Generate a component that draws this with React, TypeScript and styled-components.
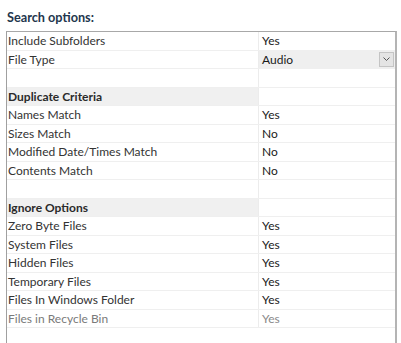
import styled, { createGlobalStyle } from 'styled-components';

const GlobalStyle = createGlobalStyle`
  body {
    margin: 0;
    background: #ffffff;
    font-family: Lato, "Open Sans", sans-serif;
  }
`;

const StyledPage = styled.div`
  width: 401px;
  height: 343px;
  overflow: hidden;
  padding-left: 6px;
  box-sizing: border-box;
`;

const StyledTitle = styled.div`
  height: 31px;
  display: flex;
  align-items: center;
  padding-left: 1px;
  padding-top: 3px;
  box-sizing: border-box;
  font-size: 12.7px;
  font-weight: 700;
  color: #23364d;
`;

const StyledGrid = styled.div`
  width: 391px;
  height: 320px;
  border-top: 1px solid #a8a8a8;
  border-left: 1px solid #a0a0a0;
  border-right: 2px solid #b4b4b4;
  box-sizing: border-box;
`;

const StyledRow = styled.div<{ $header?: boolean }>`
  display: grid;
  grid-template-columns: 252px 1fr;
  height: 18.5px;
  border-bottom: 1px solid #efefef;
  box-sizing: border-box;
  font-size: 12px;
  font-weight: ${(p) => (p.$header ? 700 : 400)};
`;

const StyledName = styled.div<{ $header?: boolean; $dim?: boolean }>`
  display: flex;
  align-items: center;
  padding-left: 1px;
  background: ${(p) => (p.$header ? '#f0f0f0' : 'transparent')};
  color: ${(p) => (p.$dim ? '#7a7a7a' : p.$header ? '#2a2a2a' : '#333333')};
  border-right: 1px solid #ececec;
  white-space: nowrap;
`;

const StyledValue = styled.div<{ $combo?: boolean; $dim?: boolean }>`
  display: flex;
  align-items: center;
  justify-content: space-between;
  padding-left: 3px;
  background: ${(p) => (p.$combo ? '#efefef' : 'transparent')};
  color: ${(p) => (p.$dim ? '#8a8a8a' : '#1a1a1a')};
`;

const StyledDropButton = styled.div`
  width: 15px;
  height: 15px;
  margin-right: 1px;
  border: 1px solid #c4c4c4;
  background: #e4e4e4;
  box-sizing: border-box;
  display: flex;
  align-items: center;
  justify-content: center;
`;

type Row = { name: string; value?: string; header?: boolean; combo?: boolean; dim?: boolean };

const rows: Row[] = [
  { name: 'Include Subfolders', value: 'Yes' },
  { name: 'File Type', value: 'Audio', combo: true },
  { name: '' },
  { name: 'Duplicate Criteria', header: true },
  { name: 'Names Match', value: 'Yes' },
  { name: 'Sizes Match', value: 'No' },
  { name: 'Modified Date/Times Match', value: 'No' },
  { name: 'Contents Match', value: 'No' },
  { name: '' },
  { name: 'Ignore Options', header: true },
  { name: 'Zero Byte Files', value: 'Yes' },
  { name: 'System Files', value: 'Yes' },
  { name: 'Hidden Files', value: 'Yes' },
  { name: 'Temporary Files', value: 'Yes' },
  { name: 'Files In Windows Folder', value: 'Yes' },
  { name: 'Files in Recycle Bin', value: 'Yes', dim: true },
];

export default function App() {
  return (
    <StyledPage>
      <GlobalStyle />
      <StyledTitle>Search options:</StyledTitle>
      <StyledGrid>
        {rows.map((r, i) => (
          <StyledRow key={i} $header={r.header}>
            <StyledName $header={r.header} $dim={r.dim}>
              {r.name}
            </StyledName>
            <StyledValue $combo={r.combo} $dim={r.dim}>
              <span>{r.value}</span>
              {r.combo && (
                <StyledDropButton>
                  <svg width="7" height="4" viewBox="0 0 7 4">
                    <path d="M0.5 0.5 L3.5 3.5 L6.5 0.5" fill="none" stroke="#555" strokeWidth="1" />
                  </svg>
                </StyledDropButton>
              )}
            </StyledValue>
          </StyledRow>
        ))}
      </StyledGrid>
    </StyledPage>
  );
}
